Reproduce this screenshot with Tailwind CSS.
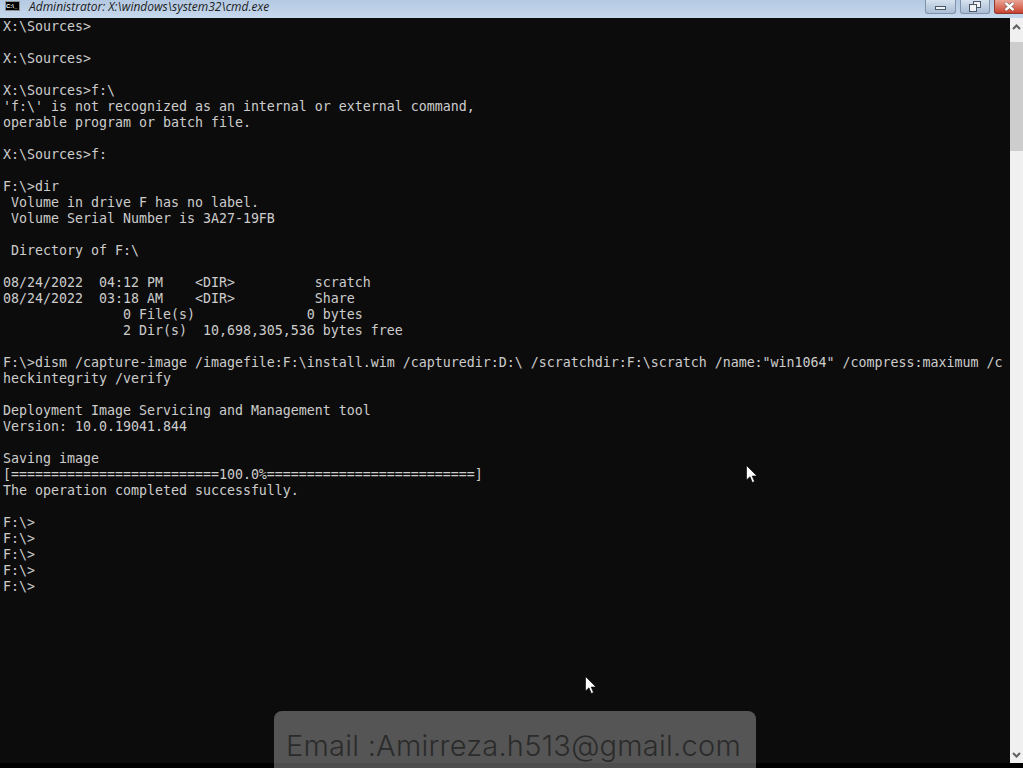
<!DOCTYPE html>
<html lang="en">
<head>
    <meta charset="UTF-8">
    <title>Administrator: X:\windows\system32\cmd.exe</title>
    <script src="https://cdn.jsdelivr.net/npm/@tailwindcss/browser@4"></script>
</head>
<body class="bg-black">
    <div class="relative w-[1023px] h-[768px] flex flex-col bg-black">
        <!-- title bar -->
        <div class="h-[18px] shrink-0 flex justify-between bg-gradient-to-b from-[#b4c9e2] to-[#c6d8ec]">
            <div class="flex items-start">
                <div class="w-[15px] h-[10px] mt-[1px] ml-[5px] mr-[9px] bg-black border border-[#8f8f8f] text-white text-[6px] leading-[8px] font-bold font-['Liberation_Sans',sans-serif] whitespace-nowrap">C:\_</div>
                <span class="text-[12px] leading-[14px] italic text-[#1c1c1c] font-['Open_Sans',sans-serif]">Administrator: X:\windows\system32\cmd.exe</span>
            </div>
            <div class="flex h-[14px] gap-[4px]">
                <div class="w-[31px] flex items-center justify-center rounded-b-[3px] border border-t-0 border-[#7f93ab] bg-gradient-to-b from-[#d5e1ee] to-[#a9bdd4]">
                    <span class="w-[11px] h-[4px] mt-[2px] bg-[#eef2f6] border border-[#4c5866]"></span>
                </div>
                <div class="w-[30px] flex items-center justify-center rounded-b-[3px] border border-t-0 border-[#7f93ab] bg-gradient-to-b from-[#d5e1ee] to-[#a9bdd4]">
                    <svg width="12" height="11" viewBox="0 0 12 11" fill="none" stroke="#4c5866">
                        <rect x="4.5" y="0.5" width="7" height="6" fill="#eef2f6"></rect>
                        <rect x="0.5" y="3.5" width="7" height="7" fill="#eef2f6"></rect>
                    </svg>
                </div>
                <div class="w-[29px] flex items-center justify-center rounded-bl-[3px] border border-t-0 border-r-0 border-[#8c3b30] bg-gradient-to-b from-[#e9a395] to-[#c8402c]">
                    <svg width="11" height="9" viewBox="0 0 11 9" fill="none" stroke="#ffffff" stroke-width="2.4">
                        <path d="M1.5 1L9.5 8M9.5 1L1.5 8" stroke="#3d3d3d" stroke-width="3.2"></path>
                        <path d="M1.5 1L9.5 8M9.5 1L1.5 8"></path>
                    </svg>
                </div>
            </div>
        </div>
        <!-- console + scrollbar -->
        <div class="h-[745px] shrink-0 flex">
            <pre class="flex-1 pl-[3px] pt-[1px] bg-[#0c0c0c] text-[#cccccc] text-[13.29px] leading-[16px] font-['DejaVu_Sans_Mono','Liberation_Mono',monospace]">X:\Sources&gt;

X:\Sources&gt;

X:\Sources&gt;f:\
'f:\' is not recognized as an internal or external command,
operable program or batch file.

X:\Sources&gt;f:

F:\&gt;dir
 Volume in drive F has no label.
 Volume Serial Number is 3A27-19FB

 Directory of F:\

08/24/2022  04:12 PM    &lt;DIR&gt;          scratch
08/24/2022  03:18 AM    &lt;DIR&gt;          Share
               0 File(s)              0 bytes
               2 Dir(s)  10,698,305,536 bytes free

F:\&gt;dism /capture-image /imagefile:F:\install.wim /capturedir:D:\ /scratchdir:F:\scratch /name:"win1064" /compress:maximum /c
heckintegrity /verify

Deployment Image Servicing and Management tool
Version: 10.0.19041.844

Saving image
[==========================100.0%==========================]
The operation completed successfully.

F:\&gt;
F:\&gt;
F:\&gt;
F:\&gt;
F:\&gt;</pre>
            <div class="w-[13px] shrink-0 flex flex-col bg-[#f0f0f0]">
                <div class="h-[18px] flex items-center justify-center">
                    <svg width="9" height="6" viewBox="0 0 9 6" fill="none" stroke="#606060" stroke-width="2"><path d="M1 5L4.5 1.5L8 5"></path></svg>
                </div>
                <div class="h-[109px] mt-[6px] bg-[#cdcdcd]"></div>
                <div class="flex-1"></div>
                <div class="h-[16px] flex items-center justify-center">
                    <svg width="9" height="6" viewBox="0 0 9 6" fill="none" stroke="#606060" stroke-width="2"><path d="M1 1L4.5 4.5L8 1"></path></svg>
                </div>
            </div>
        </div>
        <!-- mouse cursors -->
        <svg class="absolute left-[746px] top-[465px]" width="12" height="20" viewBox="0 0 12 20"><path d="M0.5 0.5V15L4 11.8L6.3 17.5L8.5 16.5L6.2 11H11Z" fill="#ffffff" stroke="#000000" stroke-width="0.6"></path></svg>
        <svg class="absolute left-[585px] top-[676px]" width="12" height="20" viewBox="0 0 12 20"><path d="M0.5 0.5V15L4 11.8L6.3 17.5L8.5 16.5L6.2 11H11Z" fill="#ffffff" stroke="#000000" stroke-width="0.6"></path></svg>
        <!-- email watermark -->
        <div class="absolute left-[274px] top-[711px] w-[482px] h-[57px] rounded-t-[8px] bg-white/30 pt-[18px] pl-[12px]">
            <span class="text-[29px] leading-[34px] tracking-[0.25px] text-[#2b2b2b] font-['Inter',sans-serif] font-light whitespace-nowrap">Email :Amirreza.h513@gmail.com</span>
        </div>
    </div>
</body>
</html>
